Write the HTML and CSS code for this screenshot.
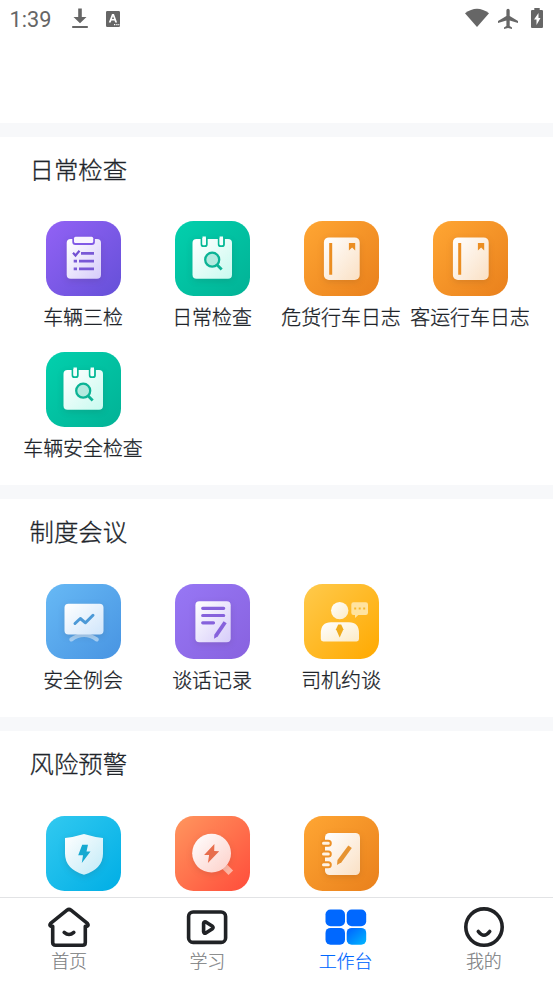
FILE: index.html
```html
<!DOCTYPE html>
<html lang="zh-CN">
<head>
<meta charset="utf-8">
<title>工作台</title>
<link rel="stylesheet" href="styles.css">
</head>
<body>
<svg class="defs" width="0" height="0" aria-hidden="true">
  <defs>
    <linearGradient id="paper-violet" x1="0" y1="0" x2="1" y2="1"><stop offset="0" stop-color="#fff"/><stop offset="1" stop-color="#d6ccfa"/></linearGradient>
    <linearGradient id="paper-green" x1="0" y1="0" x2="1" y2="1"><stop offset="0" stop-color="#fff"/><stop offset="1" stop-color="#c8faef"/></linearGradient>
    <linearGradient id="paper-orange" x1="0" y1="0" x2="1" y2="1"><stop offset="0" stop-color="#fff"/><stop offset="1" stop-color="#fae0c4"/></linearGradient>
    <linearGradient id="paper-blue" x1="0" y1="0" x2="1" y2="1"><stop offset="0" stop-color="#fff"/><stop offset="1" stop-color="#cfe5fb"/></linearGradient>
    <linearGradient id="paper-yellow" x1="0" y1="0" x2="1" y2="1"><stop offset="0" stop-color="#fff"/><stop offset="1" stop-color="#fcebc6"/></linearGradient>
    <linearGradient id="paper-cyan" x1="0" y1="0" x2="1" y2="1"><stop offset="0" stop-color="#fff"/><stop offset="1" stop-color="#c1eaf7"/></linearGradient>
    <linearGradient id="paper-red" x1="0" y1="0" x2="1" y2="1"><stop offset="0" stop-color="#fff"/><stop offset="1" stop-color="#fdcfc8"/></linearGradient>
    <linearGradient id="tab-blue" x1="0" y1="0" x2="1" y2="1"><stop offset="0.1" stop-color="#0068ff"/><stop offset="1" stop-color="#00b8ff"/></linearGradient>
    <symbol id="calendar" viewBox="0 0 75 75">
      <rect class="shade" x="17.5" y="18" width="39.5" height="39.7" rx="4" fill="url(#paper-green)"/>
      <g fill="#fff" stroke="#06b996" stroke-width="1.8"><path d="M26.5 17v6.2q0 2 2 2h1.3q2 0 2-2V17M43.7 17v6.2q0 2 2 2H47q2 0 2-2V17"/></g>
      <path d="M27.5 15.5h3.4v8h-3.4zM44.6 15.5H48v8h-3.4z" fill="#f4fffd"/>
      <circle cx="37.2" cy="38.7" r="7" fill="#b3eadf" stroke="#0cb395" stroke-width="2.3"/>
      <path d="m42.2 43.9 4.5 4.6" stroke="#0cb395" stroke-width="2.8"/>
    </symbol>
    <symbol id="book" viewBox="0 0 75 75">
      <rect class="shade" x="19.9" y="16.4" width="35.8" height="42.6" rx="5" fill="url(#paper-orange)"/>
      <path d="M25.2 22h3v31.7h-3zM44.9 22h6.300v7.5l-3.1-3.1-3.2 3.1z" fill="#eb8e22"/>
    </symbol>
  </defs>
</svg>

<header class="status">
  <span class="clock">1:39</span>
  <svg class="download" viewBox="0 0 18 22"><path d="M7.2 1.500h3.600v8.500h4.700L9 16.200 2.500 10h4.700zM1.200 19h15.600v2H1.200z"/></svg>
  <svg class="lang" viewBox="0 0 16 18"><path fill-rule="evenodd" d="M2.3 1h11.4q1.3 0 1.3 1.3v13.4q0 1.3-1.3 1.3H2.3Q1 17 1 15.7V2.3Q1 1 2.3 1ZM7 4 3.8 12.5h1.9l.7-1.9h3.1l.7 1.9h1.9L9 4Zm1 2.2 1 2.9H7ZM9 14v1.3h1.3V14Zm2.3 0v1.3h1.2V14Zm2 0v1.3h1V14Z"/></svg>
  <span class="status-gap"></span>
  <svg class="wifi" viewBox="0 0 26 22"><path d="M1 6.200Q13-2.800 25 6.200L13 20z"/></svg>
  <svg class="plane" viewBox="0 0 24 24"><path d="M22 16v-2l-8.300-5V3.500a1.600 1.600 0 0 0-3.300 0V9L2 14v2l8.400-2.500V19L8 20.600V22l4-1 4 1v-1.400L13.700 19v-5.500z"/></svg>
  <svg class="battery" viewBox="0 0 14 22"><path fill-rule="evenodd" d="M4.300 1h5.400v2h2.200q1.100 0 1.100 1.100v15.800q0 1.100-1.100 1.100H2.100Q1 21 1 19.900V4.100Q1 3 2.100 3h2.200ZM8.500 6 4 12.500h2.500v5.500l4-7H8.500Z"/></svg>
</header>

<main class="content">
  <section class="group group-first">
    <h2>日常检查</h2>
    <div class="apps">
      <div class="app">
        <svg class="tile violet" viewBox="0 0 75 75">
          <rect class="shade" x="20.7" y="18" width="34.300" height="39.700" rx="4" fill="url(#paper-violet)"/>
          <rect x="26.300" y="14.500" width="22.600" height="9.500" rx="3" fill="#8059e6"/>
          <rect x="28" y="15.700" width="19.200" height="6.300" rx="1.500" fill="#f8f4ff"/>
          <path d="m27 31.800 2.500 2.700 4-4.700" fill="none" stroke="#7250d3" stroke-width="2.200"/>
          <path d="M35 32.300h13M33 40.200h15M33 47.800h15M27.700 40.200H31M27.700 47.800H31" stroke="#7959d6" stroke-width="2.700"/>
        </svg>
        <span>车辆三检</span>
      </div>
      <div class="app"><svg class="tile green"><use href="#calendar"/></svg><span>日常检查</span></div>
      <div class="app"><svg class="tile orange"><use href="#book"/></svg><span>危货行车日志</span></div>
      <div class="app"><svg class="tile orange"><use href="#book"/></svg><span>客运行车日志</span></div>
      <div class="app"><svg class="tile green"><use href="#calendar"/></svg><span>车辆安全检查</span></div>
    </div>
  </section>

  <section class="group">
    <h2>制度会议</h2>
    <div class="apps">
      <div class="app">
        <svg class="tile blue" viewBox="0 0 75 75">
          <path d="M25.300 55.500q12.700-9 25.500 0" fill="none" stroke="#a5cff4" stroke-width="4" stroke-linecap="round"/>
          <rect class="shade" x="18.500" y="19.700" width="39" height="30.800" rx="4" fill="url(#paper-blue)"/>
          <path d="m29 39.500 5.300-5 5.200 4.300 7.500-7.500" fill="none" stroke="#4c99d7" stroke-width="3" stroke-linecap="round" stroke-linejoin="round"/>
        </svg>
        <span>安全例会</span>
      </div>
      <div class="app">
        <svg class="tile purple" viewBox="0 0 75 75">
          <rect class="shade" x="20.400" y="17.300" width="35.300" height="40.900" rx="4" fill="url(#paper-violet)"/>
          <path d="M27.700 24.300h21M27.700 31.500h21M27.700 38.800h10.800" stroke="#8662dc" stroke-width="3.200" stroke-linecap="round"/>
          <path d="m48.600 37.200 3.100 2.100-9 13.200-3.600 2.200.2-4z" fill="#8662dc"/>
        </svg>
        <span>谈话记录</span>
      </div>
      <div class="app">
        <svg class="tile yellow" viewBox="0 0 75 75">
          <circle cx="35.700" cy="26.600" r="8.700" fill="url(#paper-yellow)"/>
          <path fill="url(#paper-yellow)" d="M27 38.200h18q10 0 10 11V55q0 2.400-2.400 2.400H19.200q-2.400 0-2.400-2.400v-5.800q0-11 10.200-11z"/>
          <path d="M34.200 40.500h3l2.200 4.700-3.700 8.300-3.700-8.300z" fill="#efac1d"/>
          <path d="M49.500 18.200h12.300q2.200 0 2.200 2.200v8.300q0 2.200-2.200 2.200h-7.500L51 34v-3.100h-1.500q-2.200 0-2.200-2.200v-8.300q0-2.200 2.200-2.200z" fill="#ffe3a0"/>
          <path d="M50.200 24.600h2M54.700 24.600h2M59.200 24.600h2" stroke="#f7b72a" stroke-width="2"/>
        </svg>
        <span>司机约谈</span>
      </div>
    </div>
  </section>

  <section class="group">
    <h2>风险预警</h2>
    <div class="apps">
      <div class="app">
        <svg class="tile cyan" viewBox="0 0 75 75">
          <path class="shade" d="M38 18q10 3 19 4v15.500q0 15.500-19 21.300-19-5.800-19-21.300V22q9-1 19-4z" fill="url(#paper-cyan)"/>
          <path d="M36.200 28.700H42L40.500 35.400h4L35.800 47l1.200-7.700h-4.800z" fill="#16a9d1"/>
        </svg>
      </div>
      <div class="app">
        <svg class="tile red" viewBox="0 0 75 75">
          <path d="m50 51 5.800 5.800" stroke="#ffb6a5" stroke-width="6.500"/>
          <circle class="shade" cx="36.600" cy="37.200" r="19.400" fill="url(#paper-red)"/>
          <path d="M39.400 28 29.100 38.900l5 .2-1.200 7.900 11.300-11.800-5-.3z" fill="#e76d4c"/>
        </svg>
      </div>
      <div class="app">
        <svg class="tile orange" viewBox="0 0 75 75">
          <rect class="shade" x="21" y="17" width="35" height="42" rx="4.500" fill="url(#paper-orange)"/>
          <g fill="none" stroke="#ed9127" stroke-width="7" stroke-linecap="round"><path d="M20 27.200h4.300M20 38h4.300M20 48.800h4.300"/></g>
          <g fill="none" stroke="#fff3e4" stroke-width="3" stroke-linecap="round"><path d="M19.500 27.200h4.800M19.500 38h4.800M19.500 48.800h4.800"/></g>
          <path d="m44.300 29.600 3.500 2.500-10.300 14.200-4.500 2.700.5-5z" fill="#e69330"/>
        </svg>
      </div>
    </div>
  </section>
</main>

<nav class="tabs">
  <div class="tab">
    <svg viewBox="0 0 46 44" class="line"><path d="M6.700 21.300H5.200q-2.300-1-.6-3L21 5.200q2-1.500 4 0l16.400 13.100q1.700 2-.6 3h-1.500v16.200q0 2.800-2.800 2.800h-27q-2.800 0-2.800-2.800z"/><path d="M18.200 27.400q4.800 4.200 9.600 0"/></svg>
    <span>首页</span>
  </div>
  <div class="tab">
    <svg viewBox="0 0 46 44" class="line"><rect x="4.600" y="7" width="37" height="30.400" rx="4.500"/><path d="M19.600 18.300v8.500q.3 2 2.200 1.200l6.300-4q2-1.500 0-3l-6.300-4q-1.900-.8-2.200 1.300z"/></svg>
    <span>学习</span>
  </div>
  <div class="tab active">
    <svg viewBox="0 0 46 44" fill="#0068ff"><rect x="2.500" y="4.500" width="19.500" height="16.800" rx="5"/><rect x="23.700" y="4.500" width="19.500" height="16.800" rx="5"/><rect x="2.500" y="22.900" width="19.500" height="16.800" rx="5"/><rect x="23.700" y="22.900" width="19.500" height="16.800" rx="5" fill="url(#tab-blue)"/></svg>
    <span>工作台</span>
  </div>
  <div class="tab">
    <svg viewBox="0 0 46 44" class="line"><circle cx="23" cy="22.100" r="18.200"/><path d="M17.300 26.500q5.700 7.400 11.400 0"/></svg>
    <span>我的</span>
  </div>
</nav>
</body>
</html>
```
FILE: styles.css
```css
* { box-sizing: border-box; }

body {
  margin: 0;
  height: 983px;
  overflow: hidden;
  display: flex;
  flex-direction: column;
  background: #fff;
  color: #20242a;
  font-family: "Noto Sans CJK SC", sans-serif;
  font-weight: 300;
}

.defs { position: absolute; }

.status {
  flex: none;
  height: 123px;
  padding: 7px 9px 0 9.500px;
  display: flex;
  align-items: flex-start;
  color: #666;
  fill: #666;
}
.clock {
  width: 61px;
  padding-top: 1px;
  font: 400 21.700px/24px Roboto, sans-serif;
}
.status svg { display: block; }
.download { width: 18px; height: 22px; }
.lang { width: 16px; height: 18px; margin: 2.500px 0 0 16.500px; }
.status-gap { flex: 1; }
.wifi { width: 26px; height: 22px; }
.plane { width: 24px; height: 24px; margin-left: 6px; }
.battery { width: 14px; height: 22px; margin: 0 0 0 10px; }

.content {
  flex: 1;
  min-height: 0;
  overflow: hidden;
}
.group {
  border-top: 14px solid #f7f8fa;
  padding-bottom: 2px;
}
.group h2 {
  margin: 0;
  height: 85px;
  padding-left: 29.500px;
  font-size: 24.400px;
  font-weight: 300;
  line-height: 64px;
  -webkit-text-stroke: .3px currentColor;
}
.group-first h2 { height: 84px; }
.apps {
  display: grid;
  grid-template-columns: repeat(4, 129px);
  padding-left: 19px;
}
.app {
  height: 131px;
  display: flex;
  flex-direction: column;
  align-items: center;
}
.app span {
  margin: 6px 1px 0 0;
  font-size: 19.900px;
  line-height: 30px;
  white-space: nowrap;
  -webkit-text-stroke: .3px currentColor;
}
.tile {
  flex: none;
  width: 75px;
  height: 75px;
  border-radius: 18.500px;
}
.shade { filter: drop-shadow(0 2px 3px rgba(60, 30, 20, .13)); }
.violet { background: linear-gradient(135deg, #9262f5, #6550d8); }
.green { background: linear-gradient(135deg, #02d0ad, #02b296); }
.orange { background: linear-gradient(135deg, #ffa633, #e9801c); }
.blue { background: linear-gradient(135deg, #67b9f5, #4894e2); }
.purple { background: linear-gradient(135deg, #9777f5, #8862df); }
.yellow { background: linear-gradient(135deg, #ffca4c, #ffa900); }
.cyan { background: linear-gradient(135deg, #32c9f0, #00aee5); }
.red { background: linear-gradient(135deg, #ff965e, #ff4d3b); }

.tabs {
  flex: none;
  height: 86px;
  border-top: 1px solid #e2e3e5;
  background: #fff;
  display: grid;
  grid-template-columns: repeat(4, 1fr);
}
.tab {
  display: flex;
  flex-direction: column;
  align-items: center;
  padding-top: 7px;
  color: #7c7e82;
  font-size: 18px;
  line-height: 22px;
}
.tab span { -webkit-text-stroke: .15px currentColor; }
.tab svg { width: 46px; height: 44px; }
.active { color: #0068ff; }
.line {
  fill: none;
  stroke: #202225;
  stroke-width: 3.600;
  stroke-linecap: round;
  stroke-linejoin: round;
}
```
